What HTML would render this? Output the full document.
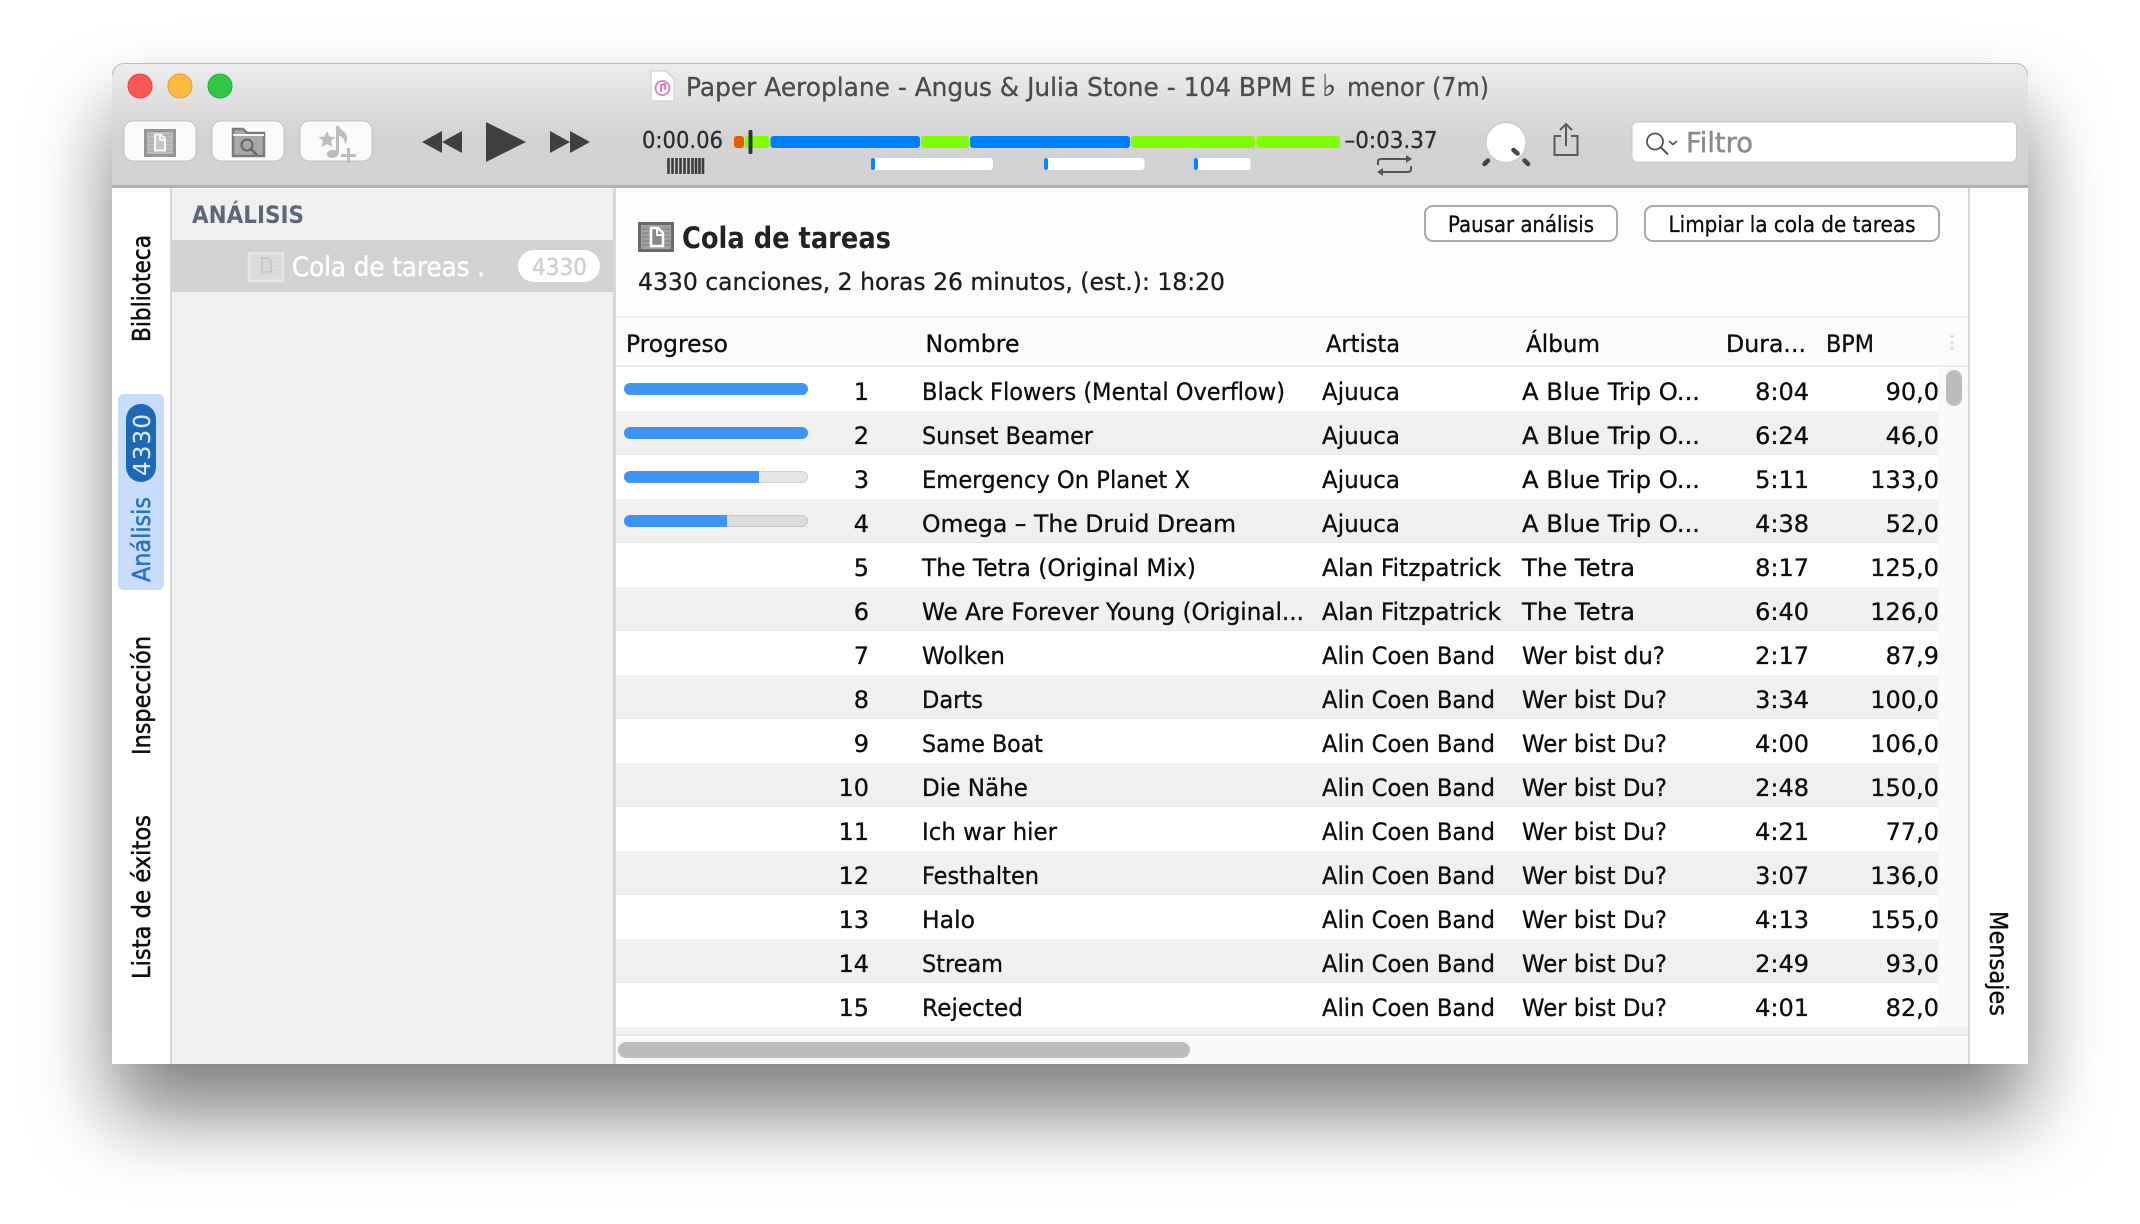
<!DOCTYPE html>
<html lang="es"><head><meta charset="utf-8"><title>Paper Aeroplane</title>
<style>
html,body{margin:0;padding:0;background:#fff;width:2140px;height:1224px;overflow:hidden}
#sh{position:absolute;left:112px;top:63px;width:1916px;height:1001px;border-radius:12px 12px 2px 2px;box-shadow:0 50px 80px rgba(0,0,0,.5)}
svg{position:absolute;left:0;top:0}
text{font-family:"DejaVu Sans","Liberation Sans",sans-serif;font-size:24px;fill:#0c0c0c;stroke:#0c0c0c;stroke-width:.3px}
.n{text-anchor:end}
</style></head><body>
<div id="sh"></div>
<svg width="2140" height="1224" viewBox="0 0 2140 1224" xmlns="http://www.w3.org/2000/svg">
<defs><linearGradient id="tb" x1="0" y1="0" x2="0" y2="1"><stop offset="0" stop-color="#ededed"/><stop offset=".45" stop-color="#d9d9d9"/><stop offset=".6" stop-color="#d3d3d3"/><stop offset="1" stop-color="#d2d2d2"/></linearGradient></defs>
<!-- window -->
<path d="M112 187V75a12 12 0 0 1 12-12H2016a12 12 0 0 1 12 12V187z" fill="url(#tb)"/>
<path d="M112.500 75a11.500 11.500 0 0 1 11.500-11.500H2016a11.500 11.500 0 0 1 11.500 11.500" fill="none" stroke="#bcbcbc"/>
<rect x="112" y="185" width="1916" height="3" fill="#b0b0b0"/>
<rect x="112" y="188" width="1916" height="876" fill="#fdfdfd"/>
<rect x="112" y="188" width="58" height="876" fill="#fff"/>
<rect x="170" y="188" width="2" height="876" fill="#d6d6d6"/>
<rect x="172" y="188" width="441" height="876" fill="#f0f0f0"/>
<rect x="613" y="188" width="3" height="876" fill="#d8d8d8"/>
<rect x="1968" y="188" width="2" height="876" fill="#d8d8d8"/>
<rect x="1970" y="188" width="58" height="876" fill="#fff"/>
<!-- traffic -->
<circle cx="140" cy="86" r="12" fill="#fc5753" stroke="#df4744"/>
<circle cx="180" cy="86" r="12" fill="#fdbc40" stroke="#de9f34"/>
<circle cx="220" cy="86" r="12" fill="#33c748" stroke="#27aa35"/>
<!-- title -->
<path d="M651 71h15l8 8v22h-23z" fill="#fff" stroke="#ccc"/>
<circle cx="662.500" cy="88" r="7" fill="none" stroke="#d58ad0" stroke-width="2"/>
<path d="M661 92v-7l4-1v6" fill="none" stroke="#e0569a" stroke-width="1.500"/>
<text x="686" y="96" textLength="630" lengthAdjust="spacingAndGlyphs" style="font-size:26px;fill:#4b4b4b;stroke:#4b4b4b">Paper Aeroplane - Angus &amp; Julia Stone - 104 BPM E</text>
<text x="1322" y="96" style="font-size:30px;fill:#4b4b4b;stroke:#4b4b4b">♭</text>
<text x="1347" y="96" textLength="142" lengthAdjust="spacingAndGlyphs" style="font-size:26px;fill:#4b4b4b;stroke:#4b4b4b">menor (7m)</text>
<!-- toolbar buttons -->
<g fill="#fafafa" stroke="#c2c2c2"><rect x="124" y="121" width="72" height="40" rx="9"/><rect x="212" y="121" width="72" height="40" rx="9"/><rect x="300" y="121" width="72" height="40" rx="9"/></g>
<g>
<rect x="145.500" y="130.500" width="29" height="25" fill="#bcbcbc" stroke="#979797" stroke-width="3"/>
<path d="M148 135h24M148 139h24M148 143h24M148 147h24M148 151h24" stroke="#a9a9a9"/>
<path d="M155 134.500h6l4 4v12h-10z" fill="#c6c6c6" stroke="#f4f4f4" stroke-width="2"/><path d="M160 135v5h5" fill="none" stroke="#f4f4f4" stroke-width="2"/>
</g>
<g>
<path d="M233 156v-27h10l4 4h17v23z" fill="#a8a8a8" stroke="#7b7b7b" stroke-width="2.500"/>
<path d="M233 135h31" stroke="#f2f2f2" stroke-width="2"/><circle cx="247" cy="145" r="5.500" fill="none" stroke="#666" stroke-width="2"/><path d="M251 149l6 6" stroke="#666" stroke-width="2.500"/>
</g>
<g fill="#bcbcbc">
<path d="M327 131l2.500 5.500 6 .5-4.500 4 1.300 6-5.300-3-5.300 3 1.300-6-4.500-4 6-.5z"/>
<path d="M336 126h3c1 4 7 5 8 11 .5 3-1 6-2.500 7 .5-4-1-7-5.500-8v16c0 4-4 6-7 6-4 0-5-2-5-4 0-3 4-5 9-4z"/>
<path d="M347 148h3v6h6v3h-6v6h-3v-6h-6v-3h6z"/>
</g>
<!-- transport -->
<g fill="#3f3f3f">
<path d="M422 142l20-11v22zM442 142l20-11v22z"/>
<path d="M486 122l40 20-40 20z"/>
<path d="M550 131l20 11-20 11zM570 131l20 11-20 11z"/>
</g>
<!-- time -->
<text x="642" y="148" textLength="81" lengthAdjust="spacingAndGlyphs" style="font-size:23px;fill:#2c2c2c;stroke:#2c2c2c">0:00.06</text>
<g>
<rect x="734" y="136" width="10" height="12" rx="3" fill="#e25f00"/>
<rect x="744.500" y="136" width="24.500" height="12" rx="3" fill="#7fff00"/>
<rect x="770.500" y="136" width="149.500" height="12" rx="3" fill="#0080ff"/>
<rect x="921" y="136" width="48" height="12" rx="3" fill="#7fff00"/>
<rect x="970" y="136" width="160" height="12" rx="3" fill="#0080ff"/>
<rect x="1131" y="136" width="124" height="12" rx="3" fill="#7fff00"/>
<rect x="1256.500" y="136" width="83.500" height="12" rx="3" fill="#7fff00"/>
<rect x="748.500" y="130" width="4" height="24" rx="1.500" fill="#333"/>
</g>
<path d="M668.500 158v16M672.500 158v16M676.500 158v16M680.500 158v16M684.500 158v16M688.500 158v16M692.500 158v16M696 158v16M699.500 158v16M703 158v16" stroke="#3c3c3c" stroke-width="2.600"/>
<g fill="#fff"><rect x="871" y="158" width="122" height="12" rx="3"/><rect x="1044" y="158" width="100.500" height="12" rx="3"/><rect x="1194" y="158" width="56.500" height="12" rx="3"/></g>
<g fill="#0a84ff"><rect x="871" y="158" width="4" height="12" rx="2"/><rect x="1044" y="158" width="4" height="12" rx="2"/><rect x="1194" y="158" width="4" height="12" rx="2"/></g>
<text x="1344.500" y="148" textLength="93" lengthAdjust="spacingAndGlyphs" style="font-size:23px;fill:#2c2c2c;stroke:#2c2c2c">–0:03.37</text>
<g fill="none" stroke="#555" stroke-width="2"><path d="M1378 165v-3c0-2 1-3 3-3h27"/><path d="M1411 166v3c0 2-1 3-3 3h-27"/></g>
<path d="M1406 155l6 4-6 4zM1383 168l-6 4 6 4z" fill="#555"/>
<!-- knob -->
<circle cx="1506" cy="142.500" r="20" fill="#fff" stroke="#c4c4c4"/>
<g stroke="#454545" stroke-width="4.500" stroke-linecap="round"><path d="M1513.500 150l4 3.500M1484.500 164l3.500-3.500M1524.500 160.500l3.500 3.500"/></g>
<!-- share -->
<path d="M1561 136h-6.500v19h23v-19h-6.500M1566 146v-21M1560 130l6-6 6 6" fill="none" stroke="#5a5a5a" stroke-width="2"/>
<!-- search -->
<rect x="1632" y="122" width="384.500" height="40" rx="5" fill="#fff" stroke="#c8c8c8"/>
<circle cx="1655" cy="141.500" r="8" fill="none" stroke="#555" stroke-width="1.800"/><path d="M1661 147.500l7 7" stroke="#555" stroke-width="2"/>
<path d="M1669 141l4 3.500 4-3.500" fill="none" stroke="#555" stroke-width="1.600"/>
<text x="1686" y="152" textLength="67" lengthAdjust="spacingAndGlyphs" style="font-size:28px;fill:#8c8c8c;stroke:#8c8c8c;stroke-width:.5px">Filtro</text>
<!-- tabs -->
<text transform="translate(150 342) rotate(-90)" textLength="107" lengthAdjust="spacingAndGlyphs" style="font-size:25px;stroke-width:.5px">Biblioteca</text>
<rect x="118" y="394" width="46" height="196" rx="6" fill="#c8dcfb"/>
<rect x="126" y="404" width="30" height="78" rx="15" fill="#1e68b8"/>
<text transform="translate(150 476) rotate(-90)" textLength="62" style="font-size:23px;fill:#dfe9f6;stroke:#dfe9f6;stroke-width:.1px">4330</text>
<text transform="translate(150 582) rotate(-90)" textLength="85" lengthAdjust="spacingAndGlyphs" style="font-size:25px;fill:#2a70c2;stroke:#2a70c2;stroke-width:.5px">Análisis</text>
<text transform="translate(150 755) rotate(-90)" textLength="119" lengthAdjust="spacingAndGlyphs" style="font-size:25px;stroke-width:.5px">Inspección</text>
<text transform="translate(150 979) rotate(-90)" textLength="164" lengthAdjust="spacingAndGlyphs" style="font-size:25px;stroke-width:.5px">Lista de éxitos</text>
<text transform="translate(1990 911) rotate(90)" textLength="105" lengthAdjust="spacingAndGlyphs" style="font-size:25px;stroke-width:.4px">Mensajes</text>
<!-- sidebar -->
<text x="192" y="223" textLength="112" lengthAdjust="spacingAndGlyphs" style="font-size:24px;font-weight:bold;fill:#5c6878;stroke:none">ANÁLISIS</text>
<rect x="172" y="240" width="441" height="52" fill="#d2d2d2"/>
<rect x="249" y="253" width="34" height="28" fill="#dcdcdc" stroke="#e6e6e6" stroke-width="2.500"/>
<path d="M252 258h28M252 262h28M252 266h28M252 270h28M252 274h28" stroke="#d6d6d6"/>
<path d="M262 258h6l3 3v11h-9z" fill="#d8d8d8" stroke="#c2c2c2" stroke-width="1.500"/>
<text x="292" y="276" textLength="193" lengthAdjust="spacingAndGlyphs" style="font-size:27px;fill:#fff;stroke:#fff;stroke-width:.5px">Cola de tareas .</text>
<rect x="518" y="250" width="82" height="32" rx="16" fill="#fff"/>
<text x="532" y="275" textLength="55" lengthAdjust="spacingAndGlyphs" style="font-size:23px;fill:#d0d0d0;stroke:#d0d0d0;stroke-width:.5px">4330</text>
<!-- heading -->
<rect x="639.500" y="223.500" width="33" height="27" fill="#a2a2a2" stroke="#6a6a6a" stroke-width="3"/>
<path d="M642 229h28M642 233h28M642 237h28M642 241h28M642 245h28" stroke="#808080"/>
<path d="M651 228h7l5 5v13h-12z" fill="#888" stroke="#fff" stroke-width="2.500"/><path d="M657 229v6h6" fill="none" stroke="#fff" stroke-width="2"/>
<text x="682" y="248" textLength="209" lengthAdjust="spacingAndGlyphs" style="font-size:29px;font-weight:bold;fill:#222;stroke:none">Cola de tareas</text>
<text x="638" y="290" textLength="587" lengthAdjust="spacingAndGlyphs" style="font-size:24px;fill:#1c1c1c;stroke:#1c1c1c">4330 canciones, 2 horas 26 minutos, (est.): 18:20</text>
<rect x="1425" y="206" width="192" height="35" rx="8" fill="#fff" stroke="#a9a9a9" stroke-width="2"/>
<rect x="1645" y="206" width="294" height="35" rx="8" fill="#fff" stroke="#a9a9a9" stroke-width="2"/>
<text x="1448" y="232" textLength="146" lengthAdjust="spacingAndGlyphs" style="font-size:22px">Pausar análisis</text>
<text x="1668.500" y="232" textLength="247" lengthAdjust="spacingAndGlyphs" style="font-size:22px">Limpiar la cola de tareas</text>
<!-- table header -->
<rect x="616" y="317" width="1352" height="50" fill="#fbfbfb"/>
<rect x="616" y="316" width="1352" height="2" fill="#efefef"/>
<rect x="616" y="365" width="1352" height="2" fill="#eaeaea"/>
<text x="626" y="352" textLength="102" lengthAdjust="spacingAndGlyphs">Progreso</text>
<text x="925.500" y="352" textLength="94" lengthAdjust="spacingAndGlyphs">Nombre</text>
<text x="1326" y="352" textLength="74" lengthAdjust="spacingAndGlyphs">Artista</text>
<text x="1526" y="352" textLength="74" lengthAdjust="spacingAndGlyphs">Álbum</text>
<text x="1726" y="352" textLength="80" lengthAdjust="spacingAndGlyphs">Dura...</text>
<text x="1826" y="352" textLength="48" lengthAdjust="spacingAndGlyphs">BPM</text>
<path d="M1952 335v3M1952 341v3M1952 347v3" stroke="#dcdcdc" stroke-width="3"/>
<!-- rows bg -->
<rect x="616" y="367" width="1322" height="667" fill="#fff"/>
<rect x="1938" y="367" width="30" height="697" fill="#f9f9f9"/>
<rect x="616" y="1036" width="1352" height="28" fill="#f9f9f9"/>
<g fill="#f0f0f0">
<rect x="616" y="411" width="1322" height="44"/><rect x="616" y="499" width="1322" height="44"/><rect x="616" y="587" width="1322" height="44"/><rect x="616" y="675" width="1322" height="44"/><rect x="616" y="763" width="1322" height="44"/><rect x="616" y="851" width="1322" height="44"/><rect x="616" y="939" width="1322" height="44"/><rect x="616" y="1027" width="1352" height="7"/>
</g>
<rect x="616" y="1034" width="1352" height="2" fill="#e6e6e6"/>
<g fill="#e6e6e6"><rect x="616" y="454" width="1322" height="1"/><rect x="616" y="542" width="1322" height="1"/><rect x="616" y="630" width="1322" height="1"/><rect x="616" y="718" width="1322" height="1"/><rect x="616" y="806" width="1322" height="1"/><rect x="616" y="894" width="1322" height="1"/><rect x="616" y="982" width="1322" height="1"/></g>
<rect x="1946" y="370" width="16" height="36" rx="8" fill="#bdbdbd"/>
<rect x="618" y="1042" width="572" height="16" rx="8" fill="#bdbdbd"/>
<!-- progress -->
<rect x="624" y="383" width="184" height="12" rx="6" fill="#3c94f5"/>
<rect x="624" y="427" width="184" height="12" rx="6" fill="#3c94f5"/>
<rect x="624.500" y="471.500" width="183" height="11" rx="5.500" fill="#e6e6e6" stroke="#cfcfcf"/>
<path d="M630 471h129v12H630a6 6 0 0 1 0-12z" fill="#3c94f5"/>
<rect x="624.500" y="515.500" width="183" height="11" rx="5.500" fill="#dcdcdc" stroke="#c8c8c8"/>
<path d="M630 515h97v12H630a6 6 0 0 1 0-12z" fill="#3c94f5"/>
<!-- rows -->
<text class="n" x="869" y="400">1</text><text x="922" y="400" textLength="363" lengthAdjust="spacingAndGlyphs">Black Flowers (Mental Overflow)</text><text x="1322" y="400" textLength="78" lengthAdjust="spacingAndGlyphs">Ajuuca</text><text x="1522" y="400" textLength="178" lengthAdjust="spacingAndGlyphs">A Blue Trip O...</text><text class="n" x="1809" y="400">8:04</text><text class="n" x="1939" y="400">90,0</text>
<text class="n" x="869" y="444">2</text><text x="922" y="444" textLength="171" lengthAdjust="spacingAndGlyphs">Sunset Beamer</text><text x="1322" y="444" textLength="78" lengthAdjust="spacingAndGlyphs">Ajuuca</text><text x="1522" y="444" textLength="178" lengthAdjust="spacingAndGlyphs">A Blue Trip O...</text><text class="n" x="1809" y="444">6:24</text><text class="n" x="1939" y="444">46,0</text>
<text class="n" x="869" y="488">3</text><text x="922" y="488" textLength="268" lengthAdjust="spacingAndGlyphs">Emergency On Planet X</text><text x="1322" y="488" textLength="78" lengthAdjust="spacingAndGlyphs">Ajuuca</text><text x="1522" y="488" textLength="178" lengthAdjust="spacingAndGlyphs">A Blue Trip O...</text><text class="n" x="1809" y="488">5:11</text><text class="n" x="1939" y="488">133,0</text>
<text class="n" x="869" y="532">4</text><text x="922" y="532" textLength="314" lengthAdjust="spacingAndGlyphs">Omega – The Druid Dream</text><text x="1322" y="532" textLength="78" lengthAdjust="spacingAndGlyphs">Ajuuca</text><text x="1522" y="532" textLength="178" lengthAdjust="spacingAndGlyphs">A Blue Trip O...</text><text class="n" x="1809" y="532">4:38</text><text class="n" x="1939" y="532">52,0</text>
<text class="n" x="869" y="576">5</text><text x="922" y="576" textLength="274" lengthAdjust="spacingAndGlyphs">The Tetra (Original Mix)</text><text x="1322" y="576" textLength="179" lengthAdjust="spacingAndGlyphs">Alan Fitzpatrick</text><text x="1522" y="576" textLength="113" lengthAdjust="spacingAndGlyphs">The Tetra</text><text class="n" x="1809" y="576">8:17</text><text class="n" x="1939" y="576">125,0</text>
<text class="n" x="869" y="620">6</text><text x="922" y="620" textLength="382" lengthAdjust="spacingAndGlyphs">We Are Forever Young (Original...</text><text x="1322" y="620" textLength="179" lengthAdjust="spacingAndGlyphs">Alan Fitzpatrick</text><text x="1522" y="620" textLength="113" lengthAdjust="spacingAndGlyphs">The Tetra</text><text class="n" x="1809" y="620">6:40</text><text class="n" x="1939" y="620">126,0</text>
<text class="n" x="869" y="664">7</text><text x="922" y="664" textLength="83" lengthAdjust="spacingAndGlyphs">Wolken</text><text x="1322" y="664" textLength="173" lengthAdjust="spacingAndGlyphs">Alin Coen Band</text><text x="1522" y="664" textLength="143" lengthAdjust="spacingAndGlyphs">Wer bist du?</text><text class="n" x="1809" y="664">2:17</text><text class="n" x="1939" y="664">87,9</text>
<text class="n" x="869" y="708">8</text><text x="922" y="708" textLength="61" lengthAdjust="spacingAndGlyphs">Darts</text><text x="1322" y="708" textLength="173" lengthAdjust="spacingAndGlyphs">Alin Coen Band</text><text x="1522" y="708" textLength="145" lengthAdjust="spacingAndGlyphs">Wer bist Du?</text><text class="n" x="1809" y="708">3:34</text><text class="n" x="1939" y="708">100,0</text>
<text class="n" x="869" y="752">9</text><text x="922" y="752" textLength="121" lengthAdjust="spacingAndGlyphs">Same Boat</text><text x="1322" y="752" textLength="173" lengthAdjust="spacingAndGlyphs">Alin Coen Band</text><text x="1522" y="752" textLength="145" lengthAdjust="spacingAndGlyphs">Wer bist Du?</text><text class="n" x="1809" y="752">4:00</text><text class="n" x="1939" y="752">106,0</text>
<text class="n" x="869" y="796">10</text><text x="922" y="796" textLength="106" lengthAdjust="spacingAndGlyphs">Die Nähe</text><text x="1322" y="796" textLength="173" lengthAdjust="spacingAndGlyphs">Alin Coen Band</text><text x="1522" y="796" textLength="145" lengthAdjust="spacingAndGlyphs">Wer bist Du?</text><text class="n" x="1809" y="796">2:48</text><text class="n" x="1939" y="796">150,0</text>
<text class="n" x="869" y="840">11</text><text x="922" y="840" textLength="135" lengthAdjust="spacingAndGlyphs">Ich war hier</text><text x="1322" y="840" textLength="173" lengthAdjust="spacingAndGlyphs">Alin Coen Band</text><text x="1522" y="840" textLength="145" lengthAdjust="spacingAndGlyphs">Wer bist Du?</text><text class="n" x="1809" y="840">4:21</text><text class="n" x="1939" y="840">77,0</text>
<text class="n" x="869" y="884">12</text><text x="922" y="884" textLength="117" lengthAdjust="spacingAndGlyphs">Festhalten</text><text x="1322" y="884" textLength="173" lengthAdjust="spacingAndGlyphs">Alin Coen Band</text><text x="1522" y="884" textLength="145" lengthAdjust="spacingAndGlyphs">Wer bist Du?</text><text class="n" x="1809" y="884">3:07</text><text class="n" x="1939" y="884">136,0</text>
<text class="n" x="869" y="928">13</text><text x="922" y="928" textLength="53" lengthAdjust="spacingAndGlyphs">Halo</text><text x="1322" y="928" textLength="173" lengthAdjust="spacingAndGlyphs">Alin Coen Band</text><text x="1522" y="928" textLength="145" lengthAdjust="spacingAndGlyphs">Wer bist Du?</text><text class="n" x="1809" y="928">4:13</text><text class="n" x="1939" y="928">155,0</text>
<text class="n" x="869" y="972">14</text><text x="922" y="972" textLength="81" lengthAdjust="spacingAndGlyphs">Stream</text><text x="1322" y="972" textLength="173" lengthAdjust="spacingAndGlyphs">Alin Coen Band</text><text x="1522" y="972" textLength="145" lengthAdjust="spacingAndGlyphs">Wer bist Du?</text><text class="n" x="1809" y="972">2:49</text><text class="n" x="1939" y="972">93,0</text>
<text class="n" x="869" y="1016">15</text><text x="922" y="1016" textLength="101" lengthAdjust="spacingAndGlyphs">Rejected</text><text x="1322" y="1016" textLength="173" lengthAdjust="spacingAndGlyphs">Alin Coen Band</text><text x="1522" y="1016" textLength="145" lengthAdjust="spacingAndGlyphs">Wer bist Du?</text><text class="n" x="1809" y="1016">4:01</text><text class="n" x="1939" y="1016">82,0</text>
</svg>
</body></html>
